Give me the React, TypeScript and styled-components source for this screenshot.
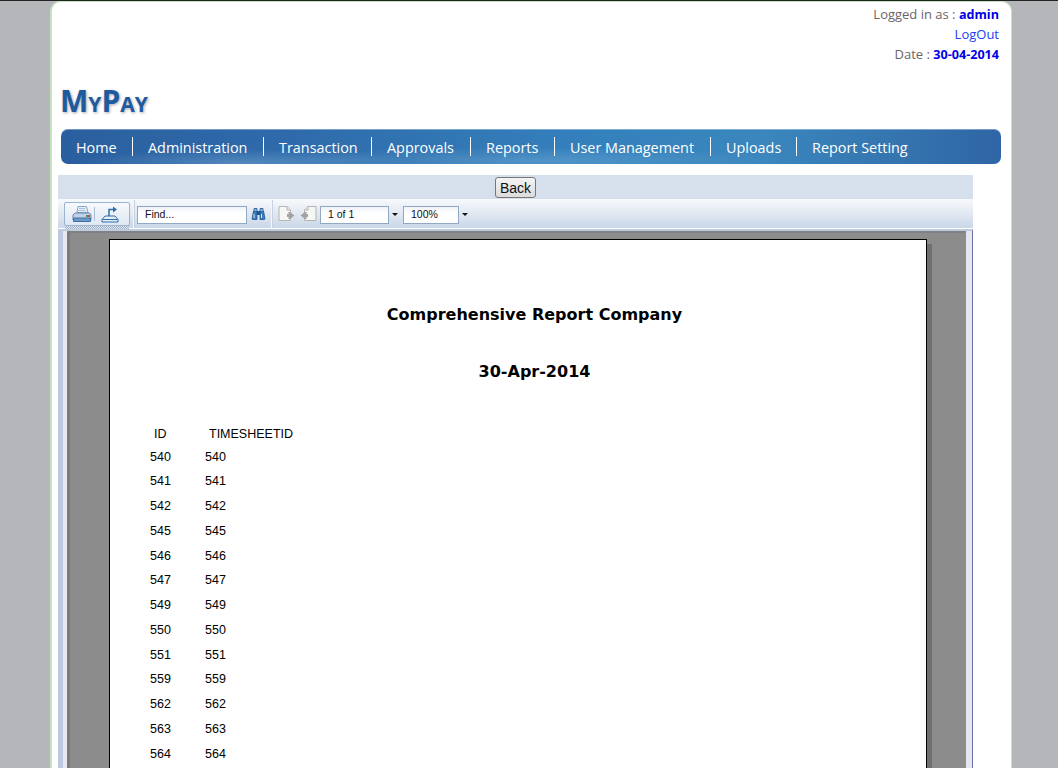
import React from 'react'
import styled, { createGlobalStyle } from 'styled-components'

const GlobalStyle = createGlobalStyle`
  html, body {
    margin: 0;
    padding: 0;
    height: 100%;
    overflow: hidden;
    background: #b5b6ba;
  }
`

const Page = styled.div`
  height: 768px;
  overflow: hidden;
  border-top: 1px solid #222;
  box-sizing: border-box;
  font-family: "Open Sans", sans-serif;
`

const Wrapper = styled.div`
  width: 962px;
  height: 800px;
  margin-left: 50px;
  box-sizing: border-box;
  background: #fff;
  border: 1px solid #c4e4be;
  border-left-width: 2px;
  border-bottom: 0;
  border-radius: 10px 10px 0 0;
  padding: 0 11px 0 6px;
`

const UserInfo = styled.div`
  height: 66px;
  padding: 2px 1px 0 0;
  box-sizing: border-box;
  text-align: right;
  font-size: 13px;
  color: #6b6466;
`

const InfoLine = styled.div`
  height: 20px;
  line-height: 20px;
`

const Strong = styled.span`
  color: #0000e6;
  font-size: 12.6px;
  font-weight: 700;
`

const LogOut = styled.a`
  color: #1a40f0;
`

const Logo = styled.div`
  height: 61px;
  padding: 13px 0 0 2px;
  box-sizing: border-box;
  font-size: 30px;
  line-height: 40px;
  font-weight: 700;
  font-variant: small-caps;
  color: #1f5a9e;
  text-shadow: 1px 1px 3px rgba(60, 60, 80, 0.45);
`

const Nav = styled.nav`
  display: flex;
  align-items: center;
  height: 35px;
  margin-left: 3px;
  width: 940px;
  border-radius: 7px;
  box-sizing: border-box;
  background:
    radial-gradient(ellipse 170px 14px at 180px 34px, rgba(150, 195, 225, 0.35), transparent),
    radial-gradient(ellipse 260px 14px at 470px 32px, rgba(150, 200, 230, 0.3), transparent),
    linear-gradient(90deg, #2a5f9f 0%, #2f6bab 25%, #3480bc 55%, #3a86bd 75%, #3473ae 90%, #2f65a6 100%);
  box-shadow: inset 0 1px 0 rgba(255, 255, 255, 0.35);
`

const NavItem = styled.a<{ $first?: boolean; $w: number }>`
  display: block;
  width: ${p => p.$w}px;
  height: 19px;
  line-height: 21px;
  box-sizing: border-box;
  padding-left: 15px;
  font-size: 14.4px;
  color: #fff;
  white-space: nowrap;
  border-left: ${p => (p.$first ? '0' : '1px solid #fff')};
`

const Viewer = styled.div`
  width: 915px;
  margin-top: 11px;
`

const BackBar = styled.div`
  display: flex;
  justify-content: center;
  height: 24px;
  padding-top: 2px;
  box-sizing: border-box;
  background: #d6e0ec;
`

const BackButton = styled.button`
  width: 41px;
  height: 21px;
  padding: 0;
  font-family: "Liberation Sans", sans-serif;
  font-size: 14px;
  color: #111;
  background: linear-gradient(#f4f4f4, #dcdcdc);
  border: 1px solid #777;
  border-radius: 3px;
`

const Toolbar = styled.div`
  display: flex;
  align-items: center;
  height: 30px;
  padding-left: 6px;
  box-sizing: border-box;
  background: linear-gradient(#f8fafc 0%, #e4eaf3 45%, #c9d7e8 100%);
  border-bottom: 1px solid #fff;
  font-family: "Liberation Sans", sans-serif;
  font-size: 10.5px;
  color: #111;
`

const ButtonGroup = styled.div`
  position: relative;
  display: flex;
  align-items: center;
  width: 66px;
  height: 24px;
  padding-left: 7px;
  box-sizing: border-box;
  background: linear-gradient(#f6f9fd, #dfe8f3);
  border: 1px solid #9db4cf;
  border-radius: 2px;
  &::after {
    content: '';
    position: absolute;
    left: 0;
    right: 0;
    bottom: -4px;
    height: 3px;
    background: repeating-conic-gradient(#9fb2c9 0 25%, #dfe6f0 0 50%) 0 0 / 2px 2px;
  }
`

const GroupDivider = styled.span`
  width: 1px;
  height: 14px;
  margin: 0 6px 0 2px;
  background: #a9bbd0;
`

const ToolDivider = styled.span<{ $left: number; $gap: number }>`
  width: 1px;
  height: 28px;
  margin: 0 ${p => p.$gap}px 0 ${p => p.$left}px;
  background: #f3f6fa;
  box-shadow: 1px 0 0 #c6d2e1;
`

const ToolInput = styled.div<{ $w: number; $ml?: number }>`
  width: ${p => p.$w}px;
  height: 18px;
  margin: 3px 0 0 ${p => p.$ml ?? 0}px;
  line-height: 15px;
  padding-left: 7px;
  box-sizing: border-box;
  background: linear-gradient(#eef2f8, #fff 40%);
  border: 1px solid #92a9c6;
`

const IconSlot = styled.span<{ $ml?: number }>`
  display: flex;
  margin-left: ${p => p.$ml ?? 0}px;
`

const Caret = styled.span`
  width: 0;
  height: 0;
  margin: 2px 5px 0 3px;
  border-left: 3px solid transparent;
  border-right: 3px solid transparent;
  border-top: 3px solid #111;
`

const ViewArea = styled.div`
  position: relative;
  display: flex;
  height: 560px;
  background: #8c8c8c;
  border-top: 2px solid #c0cbdb;
  border-left: 5px solid #bcc9de;
  border-right: 1px solid #6e6ea8;
  box-sizing: border-box;
  padding-left: 46px;
  box-shadow: inset 0 2px 0 #7d8288;
  &::before {
    content: '';
    position: absolute;
    left: 0;
    top: 0;
    bottom: 0;
    width: 4px;
    background: #e8e8f0;
    box-shadow: 3px 0 0 #7c7c7c;
  }
  &::after {
    content: '';
    position: absolute;
    right: 0;
    top: 0;
    bottom: 0;
    width: 6px;
    background: #e6e6ee;
  }
`

const ReportPage = styled.div`
  width: 818px;
  height: 600px;
  margin-top: 8px;
  box-sizing: border-box;
  background: #fff;
  border: 1px solid #000;
  box-shadow: 5px 5px 0 #707070;
`

const ReportTitle = styled.div<{ $top: number }>`
  margin-top: ${p => p.$top}px;
  padding-left: 33px;
  height: 24px;
  line-height: 24px;
  text-align: center;
  font-family: "DejaVu Sans", sans-serif;
  font-size: 16px;
  font-weight: 700;
  color: #000;
`

const Table = styled.div`
  margin-top: 41px;
  font-family: "Liberation Sans", sans-serif;
  font-size: 12.5px;
  color: #000;
`

const Row = styled.div<{ $head?: boolean }>`
  display: flex;
  height: ${p => (p.$head ? '19.5px' : '24.75px')};
  line-height: ${p => (p.$head ? '19.5px' : '24.75px')};
  padding-left: ${p => (p.$head ? 44 : 40)}px;
`

const IdCell = styled.div`
  width: 55px;
`

const printer = (
  <svg width="20" height="18" viewBox="0 0 20 18">
    <path d="M6 1.500h8.500l1.500 6H5z" fill="#e6eef8" stroke="#8aa6c6" />
    <path d="M7 3.500h6M6.500 5.500h7" stroke="#a9c0da" />
    <path d="M3 8h14.500l1.500 2v5H1v-5z" fill="#c2d2e6" stroke="#5f86b4" />
    <path d="M1.500 13h17v3.500h-17z" fill="#6f96c4" stroke="#3f6ea6" />
    <rect x="14" y="10" width="2" height="2" fill="#3aa24a" />
    <rect x="16" y="10" width="2" height="2" fill="#c8503c" />
  </svg>
)

const exportIcon = (
  <svg width="18" height="18" viewBox="0 0 18 18">
    <path d="M1 17v-2.500L4 11h10l3 3.500V17z" fill="#e4eef8" stroke="#2f6ea8" />
    <path d="M1.500 14.500h15" stroke="#2f6ea8" />
    <path d="M8 11V4.500h4" fill="none" stroke="#2f6ea8" strokeWidth="1.500" />
    <path d="M12 1.500l4 3-4 3z" fill="#2f6ea8" />
  </svg>
)

const binoculars = (
  <svg width="15" height="14" viewBox="0 0 15 14">
    <path d="M1 12l1.500-8h3.500v8.500H2z" fill="#3c7ab8" stroke="#1c5590" strokeWidth=".8" />
    <path d="M14 12l-1.500-8H9v8.500h4z" fill="#3c7ab8" stroke="#1c5590" strokeWidth=".8" />
    <path d="M3 4V1.500h3V4M9 4V1.500h3V4" fill="#8db6dd" stroke="#1c5590" strokeWidth=".8" />
    <rect x="6" y="4" width="3" height="4" fill="#1c5590" />
    <path d="M3 11V7M10.500 11V7" stroke="#d6e6f5" />
  </svg>
)

const PageArrow: React.FC<{ flip?: boolean }> = ({ flip }) => (
  <svg width="17" height="15" viewBox="0 0 17 15" style={flip ? { transform: 'scaleX(-1)' } : undefined}>
    <path d="M1 .5h8l3.500 3.500v10.500H1z" fill="#f6f6f4" stroke="#b4b4b0" />
    <path d="M9 .5V4h3.500" fill="#e2e2e0" stroke="#b4b4b0" />
    <path d="M10 6h2l4.500 3.500L12 13h-2l1-2H9V8h2z" fill="#a2a2a2" />
  </svg>
)

const navItems = [
  { label: 'Home', w: 71 },
  { label: 'Administration', w: 131 },
  { label: 'Transaction', w: 108 },
  { label: 'Approvals', w: 99 },
  { label: 'Reports', w: 84 },
  { label: 'User Management', w: 156 },
  { label: 'Uploads', w: 86 },
  { label: 'Report Setting', w: 140 },
]

const ids = [540, 541, 542, 545, 546, 547, 549, 550, 551, 559, 562, 563, 564]

export default function App() {
  return (
    <Page>
      <GlobalStyle />
      <Wrapper>
        <UserInfo>
          <InfoLine>Logged in as : <Strong>admin</Strong></InfoLine>
          <InfoLine><LogOut>LogOut</LogOut></InfoLine>
          <InfoLine>Date : <Strong>30-04-2014</Strong></InfoLine>
        </UserInfo>
        <Logo>MyPay</Logo>
        <Nav>
          {navItems.map((item, i) => (
            <NavItem key={item.label} $first={i === 0} $w={item.w}>{item.label}</NavItem>
          ))}
        </Nav>
        <Viewer>
          <BackBar>
            <BackButton>Back</BackButton>
          </BackBar>
          <Toolbar>
            <ButtonGroup>
              {printer}
              <GroupDivider />
              {exportIcon}
            </ButtonGroup>
            <ToolDivider $left={3} $gap={3} />
            <ToolInput $w={110}>Find...</ToolInput>
            <IconSlot $ml={4}>{binoculars}</IconSlot>
            <ToolDivider $left={5} $gap={6} />
            <IconSlot><PageArrow /></IconSlot>
            <IconSlot $ml={5}><PageArrow flip /></IconSlot>
            <ToolInput $w={69} $ml={3}>1 of 1</ToolInput>
            <Caret />
            <ToolInput $w={56}>100%</ToolInput>
            <Caret />
          </Toolbar>
          <ViewArea>
            <ReportPage>
              <ReportTitle $top={63}>Comprehensive Report Company</ReportTitle>
              <ReportTitle $top={33}>30-Apr-2014</ReportTitle>
              <Table>
                <Row $head>
                  <IdCell>ID</IdCell>
                  <div>TIMESHEETID</div>
                </Row>
                {ids.map(id => (
                  <Row key={id}>
                    <IdCell>{id}</IdCell>
                    <div>{id}</div>
                  </Row>
                ))}
              </Table>
            </ReportPage>
          </ViewArea>
        </Viewer>
      </Wrapper>
    </Page>
  )
}
